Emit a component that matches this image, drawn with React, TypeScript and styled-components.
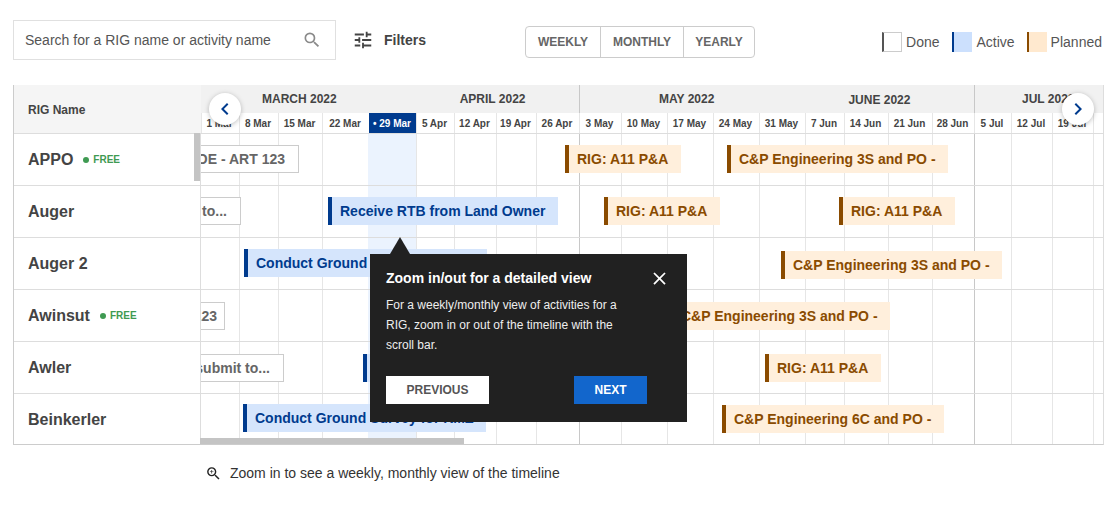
import styled, { createGlobalStyle } from "styled-components";
import { MdChevronLeft, MdChevronRight, MdClose, MdSearch, MdTune, MdZoomIn } from "react-icons/md";

type BarKind = "done" | "active" | "planned";

interface IBar {
  kind: BarKind;
  label: string;
  left: number;
  top: number;
  width: number;
  endPad?: number;
}

interface IRig {
  name: string;
  free?: boolean;
  bars: IBar[];
}

const WEEKS = [
  { label: "1 Mar", width: 38 },
  { label: "8 Mar", width: 39 },
  { label: "15 Mar", width: 44 },
  { label: "22 Mar", width: 47 },
  { label: "• 29 Mar", width: 47, today: true },
  { label: "5 Apr", width: 38 },
  { label: "12 Apr", width: 42 },
  { label: "19 Apr", width: 40 },
  { label: "26 Apr", width: 43, monthEnd: true },
  { label: "3 May", width: 42 },
  { label: "10 May", width: 46 },
  { label: "17 May", width: 46 },
  { label: "24 May", width: 46 },
  { label: "31 May", width: 46 },
  { label: "7 Jun", width: 39 },
  { label: "14 Jun", width: 44 },
  { label: "21 Jun", width: 44 },
  { label: "28 Jun", width: 42, monthEnd: true },
  { label: "5 Jul", width: 37 },
  { label: "12 Jul", width: 41 },
  { label: "19 Jul", width: 41 },
  { label: "", width: 10 },
];

const weekColumns = WEEKS.map((w) => `${w.width}px`).join(" ");

const CNP = "C&P Engineering 3S and PO -";
const A11 = "RIG: A11 P&A";
const GROUND = "Conduct Ground Survey for RMZ";

// left is measured from the start of the timeline track
const RIGS: IRig[] = [
  {
    name: "APPO",
    free: true,
    bars: [
      { kind: "done", label: "DOE - ART 123", left: -40, top: 11, width: 138 },
      { kind: "planned", label: A11, left: 364, top: 11, width: 116 },
      { kind: "planned", label: CNP, left: 526, top: 11, width: 221 },
    ],
  },
  {
    name: "Auger",
    bars: [
      { kind: "done", label: "submit to...", left: -60, top: 11, width: 100 },
      { kind: "active", label: "Receive RTB from Land Owner", left: 127, top: 11, width: 230 },
      { kind: "planned", label: A11, left: 403, top: 11, width: 116 },
      { kind: "planned", label: A11, left: 638, top: 11, width: 116 },
    ],
  },
  {
    name: "Auger 2",
    bars: [
      { kind: "active", label: GROUND, left: 43, top: 11, width: 243 },
      { kind: "planned", label: CNP, left: 580, top: 13, width: 221 },
    ],
  },
  {
    name: "Awinsut",
    free: true,
    bars: [
      { kind: "done", label: "ART 123", left: -60, top: 12, width: 84, endPad: 7 },
      { kind: "planned", label: CNP, left: 468, top: 12, width: 221 },
    ],
  },
  {
    name: "Awler",
    bars: [
      { kind: "done", label: "submit to...", left: -20, top: 12, width: 103 },
      { kind: "active", label: "Receive RTB from Land Owner", left: 162, top: 12, width: 230 },
      { kind: "planned", label: A11, left: 564, top: 12, width: 116 },
    ],
  },
  {
    name: "Beinkerler",
    bars: [
      { kind: "active", label: GROUND, left: 42, top: 10, width: 243 },
      { kind: "planned", label: "C&P Engineering 6C and PO -", left: 521, top: 11, width: 222 },
    ],
  },
];

const barColors = {
  done: { bg: "#fff", text: "#666", edge: "#ccc" },
  active: { bg: "#d5e5fc", text: "#003b8e", edge: "#003b8e" },
  planned: { bg: "#ffefdc", text: "#8a4b00", edge: "#8a4b00" },
};

const GlobalStyle = createGlobalStyle`
  html, body {
    margin: 0;
    padding: 0;
    background: #fff;
    font-family: "Liberation Sans", Arial, sans-serif;
  }
`;

const Page = styled.div`
  width: 1120px;
  height: 514px;
  overflow: hidden;
  padding: 20px 18px 0 13px;
  box-sizing: border-box;
`;

const Toolbar = styled.div`
  display: flex;
  align-items: flex-start;
  height: 40px;
`;

const SearchBox = styled.div`
  width: 323px;
  height: 40px;
  box-sizing: border-box;
  border: 1px solid #e0e0e0;
  padding: 0 13px 0 11px;
  display: flex;
  align-items: center;
  justify-content: space-between;
  font-size: 14px;
  color: #555;
  svg {
    color: #8a8a8a;
    font-size: 20px;
  }
`;

const FiltersButton = styled.div`
  display: flex;
  align-items: center;
  gap: 10px;
  height: 40px;
  margin-left: 16px;
  font-size: 14px;
  font-weight: bold;
  color: #444;
  svg {
    font-size: 22px;
  }
`;

const ViewToggle = styled.div`
  display: flex;
  height: 32px;
  box-sizing: border-box;
  margin: 6px 0 0 99px;
  border: 1px solid #ccc;
  border-radius: 4px;
`;

const ViewOption = styled.div<{ $width: number }>`
  width: ${(p) => p.$width}px;
  box-sizing: border-box;
  display: flex;
  align-items: center;
  justify-content: center;
  font-size: 12px;
  font-weight: bold;
  color: #666;
  & + & {
    border-left: 1px solid #ccc;
  }
`;

const Legend = styled.div`
  display: flex;
  align-items: center;
  height: 20px;
  margin: 12px 0 0 auto;
  font-size: 14px;
  color: #555;
`;

const LegendSwatch = styled.span<{ $kind: BarKind }>`
  width: 20px;
  height: 20px;
  box-sizing: border-box;
  margin-right: 4px;
  background: ${(p) => (p.$kind === "active" ? "#cce0fd" : p.$kind === "planned" ? "#ffe9cf" : "#fff")};
  border-left: 2px solid
    ${(p) => (p.$kind === "active" ? "#003b8e" : p.$kind === "planned" ? "#8a4b00" : "#555")};
  border-top: ${(p) => (p.$kind === "done" ? "1px solid #ccc" : "none")};
  border-right: ${(p) => (p.$kind === "done" ? "1px solid #ccc" : "none")};
  border-bottom: ${(p) => (p.$kind === "done" ? "1px solid #ccc" : "none")};
`;

const LegendLabel = styled.span<{ $gap?: number }>`
  margin-right: ${(p) => p.$gap ?? 0}px;
`;

const Chart = styled.div`
  position: relative;
  width: 1091px;
  margin-top: 25px;
  box-sizing: border-box;
  border-left: 1px solid #ccc;
  border-right: 1px solid #ddd;
  border-bottom: 1px solid #ccc;
`;

const ChartHeader = styled.div`
  display: flex;
  height: 49px;
  border-bottom: 1px solid #ddd;
  box-sizing: border-box;
`;

const NameHeader = styled.div`
  width: 187px;
  flex-shrink: 0;
  padding: 2px 0 0 14px;
  display: flex;
  align-items: center;
  box-sizing: border-box;
  background: #f5f5f5;
  font-size: 12px;
  font-weight: bold;
  color: #444;
`;

const TimelineHeader = styled.div`
  flex: 1;
  display: flex;
  flex-direction: column;
`;

const MonthRow = styled.div`
  display: flex;
  height: 28px;
  background: #f1f1f1;
`;

const MonthGroup = styled.div<{ $width: number }>`
  width: ${(p) => p.$width}px;
  display: flex;
  align-items: center;
  box-sizing: border-box;
  border-right: 1px solid #c8c8c8;
  &:last-child {
    border-right: none;
  }
`;

const MonthLabel = styled.span<{ $offset: number; $drop?: boolean }>`
  margin-left: ${(p) => p.$offset}px;
  margin-top: ${(p) => (p.$drop ? 2 : 0)}px;
  font-size: 12px;
  font-weight: bold;
  color: #444;
  white-space: nowrap;
`;

const WeekRow = styled.div`
  flex: 1;
  display: grid;
  grid-template-columns: ${weekColumns};
`;

const WeekCell = styled.div<{ $today?: boolean }>`
  display: flex;
  align-items: center;
  justify-content: center;
  box-sizing: border-box;
  padding-right: 2px;
  border-left: 1px solid ${(p) => (p.$today ? "#003b8e" : "#e6e6e6")};
  font-size: 10px;
  font-weight: bold;
  white-space: nowrap;
  overflow: hidden;
  color: ${(p) => (p.$today ? "#fff" : "#444")};
  background: ${(p) => (p.$today ? "#003b8e" : "#fff")};
`;

const ChartBody = styled.div`
  position: relative;
`;

const GridLayer = styled.div`
  position: absolute;
  top: 0;
  bottom: 0;
  left: 188px;
  right: 0;
  overflow: hidden;
  display: grid;
  grid-template-columns: ${weekColumns};
`;

const GridColumn = styled.div<{ $today?: boolean; $monthEnd?: boolean }>`
  box-sizing: border-box;
  margin-left: ${(p) => (p.$today ? -2 : 0)}px;
  background: ${(p) => (p.$today ? "#ebf3fe" : "transparent")};
  border-right: 1px solid ${(p) => (p.$monthEnd ? "#c8c8c8" : "#e6e6e6")};
`;

const RowName = styled.div`
  width: 187px;
  flex-shrink: 0;
  box-sizing: border-box;
  padding-left: 14px;
  display: flex;
  align-items: center;
  gap: 10px;
  background: #fff;
  border-right: 1px solid #ddd;
  font-size: 16px;
  font-weight: bold;
  color: #444;
`;

const Row = styled.div`
  position: relative;
  display: flex;
  height: 52px;
  box-sizing: border-box;
  border-bottom: 1px solid #ddd;
  &:last-child {
    height: 50px;
    border-bottom: none;
  }
  &:last-child ${RowName} {
    padding-top: 2px;
  }
`;

const FreeTag = styled.span`
  display: flex;
  align-items: center;
  gap: 4px;
  font-size: 10px;
  color: #3f9a52;
  &::before {
    content: "";
    width: 6px;
    height: 6px;
    border-radius: 50%;
    background: #3f9a52;
  }
`;

const Track = styled.div`
  position: relative;
  flex: 1;
  overflow: hidden;
`;

const Bar = styled.div<{ $kind: BarKind; $left: number; $top: number; $width: number; $endPad?: number }>`
  position: absolute;
  left: ${(p) => p.$left}px;
  top: ${(p) => p.$top}px;
  width: ${(p) => p.$width}px;
  height: 28px;
  box-sizing: border-box;
  display: flex;
  align-items: center;
  justify-content: ${(p) => (p.$kind === "done" ? "flex-end" : "flex-start")};
  padding: ${(p) => (p.$kind === "done" ? `0 ${p.$endPad ?? 13}px 0 0` : "0 0 0 8px")};
  font-size: 14px;
  font-weight: bold;
  white-space: nowrap;
  overflow: hidden;
  background: ${(p) => barColors[p.$kind].bg};
  color: ${(p) => barColors[p.$kind].text};
  border-left: 4px solid ${(p) => barColors[p.$kind].edge};
  border: ${(p) => (p.$kind === "done" ? "1px solid #ccc" : undefined)};
`;

const SideScrollThumb = styled.div`
  position: absolute;
  left: 180px;
  top: 48px;
  width: 6px;
  height: 48px;
  background: #c4c4c4;
`;

const BottomScrollThumb = styled.div`
  position: absolute;
  left: 186px;
  bottom: 0;
  width: 264px;
  height: 6px;
  background: #c4c4c4;
`;

const NavButton = styled.div<{ $side: "left" | "right" }>`
  position: absolute;
  top: 8px;
  left: ${(p) => (p.$side === "left" ? 195 : 1048)}px;
  width: 32px;
  height: 32px;
  border-radius: 50%;
  background: #fff;
  box-shadow: 0 1px 5px rgba(0, 0, 0, 0.25);
  display: flex;
  align-items: center;
  justify-content: center;
  color: #003b8e;
  font-size: 24px;
`;

const Popover = styled.div`
  position: absolute;
  left: 356px;
  top: 169px;
  width: 317px;
  height: 168px;
  box-sizing: border-box;
  padding: 16px;
  background: #212121;
  color: #fff;
  &::before {
    content: "";
    position: absolute;
    left: 20px;
    top: -17px;
    border-left: 10px solid transparent;
    border-right: 10px solid transparent;
    border-bottom: 17px solid #212121;
  }
`;

const PopoverHead = styled.div`
  display: flex;
  align-items: center;
  justify-content: space-between;
  height: 16px;
  margin-bottom: 9px;
  font-size: 14px;
  font-weight: bold;
  svg {
    font-size: 21px;
    margin-right: 1px;
  }
`;

const PopoverText = styled.p`
  width: 240px;
  margin: 0;
  font-size: 12px;
  line-height: 20px;
  color: #eee;
`;

const PopoverActions = styled.div`
  display: flex;
  margin-top: 21px;
  padding-right: 24px;
  justify-content: space-between;
`;

const PopoverButton = styled.div<{ $primary?: boolean }>`
  width: ${(p) => (p.$primary ? 73 : 103)}px;
  height: 28px;
  display: flex;
  align-items: center;
  justify-content: center;
  font-size: 12px;
  font-weight: bold;
  background: ${(p) => (p.$primary ? "#1266cc" : "#fff")};
  color: ${(p) => (p.$primary ? "#fff" : "#555")};
`;

const ZoomHint = styled.div`
  display: flex;
  align-items: center;
  gap: 8px;
  height: 20px;
  margin: 18px 0 0 192px;
  font-size: 14px;
  color: #333;
  svg {
    font-size: 17px;
    color: #222;
  }
`;

function App() {
  return (
    <Page>
      <GlobalStyle />
      <Toolbar>
        <SearchBox>
          Search for a RIG name or activity name
          <MdSearch />
        </SearchBox>
        <FiltersButton>
          <MdTune />
          Filters
        </FiltersButton>
        <ViewToggle>
          <ViewOption $width={74}>WEEKLY</ViewOption>
          <ViewOption $width={83}>MONTHLY</ViewOption>
          <ViewOption $width={71}>YEARLY</ViewOption>
        </ViewToggle>
        <Legend>
          <LegendSwatch $kind="done" />
          <LegendLabel $gap={13}>Done</LegendLabel>
          <LegendSwatch $kind="active" />
          <LegendLabel $gap={12}>Active</LegendLabel>
          <LegendSwatch $kind="planned" />
          <LegendLabel>Planned</LegendLabel>
        </Legend>
      </Toolbar>

      <Chart>
        <ChartHeader>
          <NameHeader>RIG Name</NameHeader>
          <TimelineHeader>
            <MonthRow>
              <MonthGroup $width={379}>
                <MonthLabel $offset={61}>MARCH 2022</MonthLabel>
                <MonthLabel $offset={123}>APRIL 2022</MonthLabel>
              </MonthGroup>
              <MonthGroup $width={395}>
                <MonthLabel $offset={79}>MAY 2022</MonthLabel>
                <MonthLabel $offset={134} $drop>
                  JUNE 2022
                </MonthLabel>
              </MonthGroup>
              <MonthGroup $width={128}>
                <MonthLabel $offset={47}>JUL 2022</MonthLabel>
              </MonthGroup>
            </MonthRow>
            <WeekRow>
              {WEEKS.map((w, idx) => (
                <WeekCell key={idx} $today={w.today}>
                  {w.label}
                </WeekCell>
              ))}
            </WeekRow>
          </TimelineHeader>
        </ChartHeader>

        <ChartBody>
          <GridLayer>
            {WEEKS.map((w, idx) => (
              <GridColumn key={idx} $today={w.today} $monthEnd={w.monthEnd} />
            ))}
          </GridLayer>
          {RIGS.map((rig) => (
            <Row key={rig.name}>
              <RowName>
                {rig.name}
                {rig.free && <FreeTag>FREE</FreeTag>}
              </RowName>
              <Track>
                {rig.bars.map((bar, idx) => (
                  <Bar
                    key={idx}
                    $kind={bar.kind}
                    $left={bar.left}
                    $top={bar.top}
                    $width={bar.width}
                    $endPad={bar.endPad}
                  >
                    {bar.label}
                  </Bar>
                ))}
              </Track>
            </Row>
          ))}
        </ChartBody>

        <SideScrollThumb />
        <BottomScrollThumb />
        <NavButton $side="left">
          <MdChevronLeft />
        </NavButton>
        <NavButton $side="right">
          <MdChevronRight />
        </NavButton>

        <Popover>
          <PopoverHead>
            Zoom in/out for a detailed view
            <MdClose />
          </PopoverHead>
          <PopoverText>
            For a weekly/monthly view of activities for a RIG, zoom in or out of the timeline with the scroll bar.
          </PopoverText>
          <PopoverActions>
            <PopoverButton>PREVIOUS</PopoverButton>
            <PopoverButton $primary>NEXT</PopoverButton>
          </PopoverActions>
        </Popover>
      </Chart>

      <ZoomHint>
        <MdZoomIn />
        Zoom in to see a weekly, monthly view of the timeline
      </ZoomHint>
    </Page>
  );
}

export default App;
